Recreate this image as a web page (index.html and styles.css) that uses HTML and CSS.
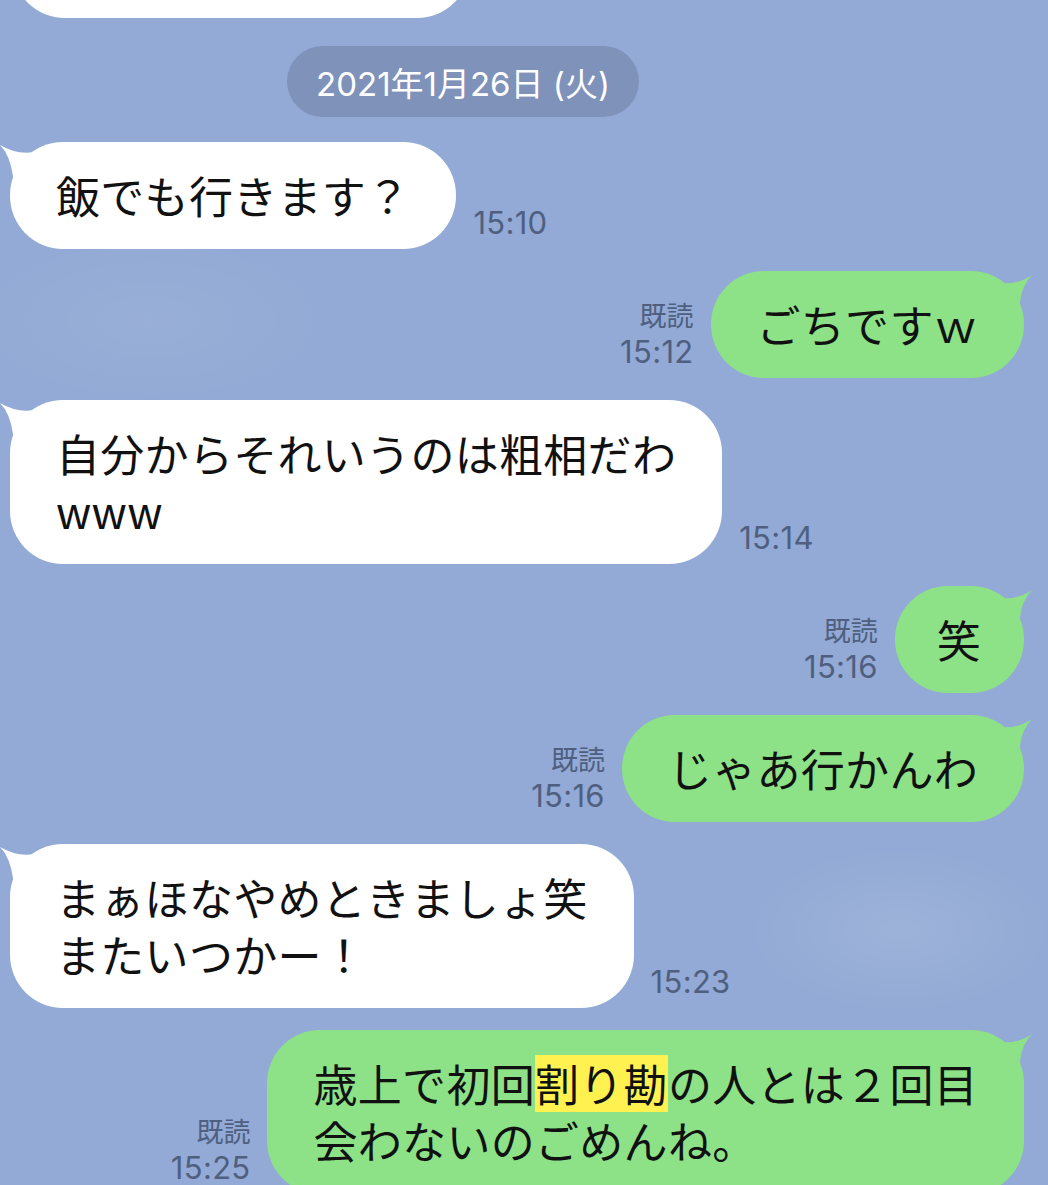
FILE: index.html
```html
<!DOCTYPE html>
<html lang="ja">
<head>
<meta charset="utf-8">
<title>LINE</title>
<link rel="stylesheet" href="styles.css">
</head>
<body>
<main class="chat">
  <div class="row left first">
    <div class="bubble white cut"></div>
  </div>

  <div class="date"><span class="date-pill">2021年1月26日 (火)</span></div>

  <div class="row left">
    <div class="bubble white">
      <svg class="tail tail-l" width="40" height="40" viewBox="0 0 40 40"><path d="M0,3 Q17,13 34,10 L34,40 L14,40 L13,34 Q10,13 0,3 Z"/></svg>
      飯でも行きます？
    </div>
    <div class="meta"><span class="time">15:10</span></div>
  </div>

  <div class="row right">
    <div class="meta"><span class="read">既読</span><span class="time">15:12</span></div>
    <div class="bubble green">
      <svg class="tail tail-r" width="40" height="40" viewBox="0 0 40 40"><path d="M38,4 Q24,14 6,12 L6,40 L24,40 L26,31 Q28,14 38,4 Z"/></svg>
      ごちですｗ
    </div>
  </div>

  <div class="row left">
    <div class="bubble white">
      <svg class="tail tail-l" width="40" height="40" viewBox="0 0 40 40"><path d="M0,3 Q17,13 34,10 L34,40 L14,40 L13,34 Q10,13 0,3 Z"/></svg>
      <span class="line">自分からそれいうのは粗相だわ</span><span class="line">www</span>
    </div>
    <div class="meta"><span class="time">15:14</span></div>
  </div>

  <div class="row right">
    <div class="meta"><span class="read">既読</span><span class="time">15:16</span></div>
    <div class="bubble green single">
      <svg class="tail tail-r" width="40" height="40" viewBox="0 0 40 40"><path d="M38,4 Q24,14 6,12 L6,40 L24,40 L26,31 Q28,14 38,4 Z"/></svg>
      笑
    </div>
  </div>

  <div class="row right">
    <div class="meta"><span class="read">既読</span><span class="time">15:16</span></div>
    <div class="bubble green">
      <svg class="tail tail-r" width="40" height="40" viewBox="0 0 40 40"><path d="M38,4 Q24,14 6,12 L6,40 L24,40 L26,31 Q28,14 38,4 Z"/></svg>
      じゃあ行かんわ
    </div>
  </div>

  <div class="row left">
    <div class="bubble white">
      <svg class="tail tail-l" width="40" height="40" viewBox="0 0 40 40"><path d="M0,3 Q17,13 34,10 L34,40 L14,40 L13,34 Q10,13 0,3 Z"/></svg>
      <span class="line">まぁほなやめときましょ笑</span><span class="line">またいつかー！</span>
    </div>
    <div class="meta"><span class="time">15:23</span></div>
  </div>

  <div class="row right">
    <div class="meta"><span class="read">既読</span><span class="time">15:25</span></div>
    <div class="bubble green">
      <svg class="tail tail-r" width="40" height="40" viewBox="0 0 40 40"><path d="M38,4 Q24,14 6,12 L6,40 L24,40 L26,31 Q28,14 38,4 Z"/></svg>
      <span class="line">歳上で初回<span class="mark">割り勘</span>の人とは２回目</span><span class="line">会わないのごめんね。</span>
    </div>
  </div>
</main>
</body>
</html>
```

FILE: styles.css
```css
html, body {
  margin: 0;
  padding: 0;
}

body {
  width: 1048px;
  height: 1185px;
  overflow: hidden;
  background-color: #92aad5;
  background-image:
    radial-gradient(ellipse 220px 120px at 900px 930px, rgba(255,255,255,0.10), rgba(255,255,255,0) 70%),
    radial-gradient(ellipse 260px 120px at 150px 320px, rgba(255,255,255,0.06), rgba(255,255,255,0) 70%);
  font-family: "Noto Sans CJK JP", "Noto Sans", sans-serif;
  color: #111;
}

.chat {
  display: flex;
  flex-direction: column;
  gap: 22px;
}

.row {
  display: flex;
  align-items: flex-end;
  gap: 17px;
}

.row.left {
  padding-left: 10px;
  justify-content: flex-start;
}

.row.right {
  padding-right: 24px;
  justify-content: flex-end;
}

.row.first {
  margin-top: -89px;
}

.bubble {
  position: relative;
  border-radius: 53px;
  padding: 25px 46px;
  font-size: 44px;
  line-height: 57px;
  white-space: nowrap;
  letter-spacing: 0.3px;
}

.line {
  display: block;
  height: 57px;
}

.bubble.white {
  background: #ffffff;
}

.bubble.green {
  background: #8de287;
}

.bubble.single {
  padding-left: 42px;
  padding-right: 43px;
}

.bubble.cut {
  width: 366px;
  height: 57px;
  margin-left: 2px;
}

.tail {
  position: absolute;
  top: 0;
}

.tail-l {
  left: -10px;
  fill: #ffffff;
}

.tail-r {
  right: -10px;
  fill: #8de287;
}

.mark {
  display: inline-block;
  background: #fff150;
  line-height: 57px;
  height: 57px;
  vertical-align: top;
}

.meta {
  display: flex;
  flex-direction: column;
  padding-bottom: 9px;
  color: #4f5f80;
  line-height: 34px;
}

.row.right .meta {
  align-items: flex-end;
}

.read {
  font-size: 27px;
  margin-bottom: 3px;
}

.time {
  font-family: Inter, "Noto Sans", sans-serif;
  font-size: 31px;
  letter-spacing: 0.3px;
}

.date {
  display: flex;
  justify-content: center;
  margin: 6px 0 3px;
}

.date-pill {
  display: inline-flex;
  align-items: center;
  justify-content: center;
  width: 352px;
  height: 71px;
  border-radius: 36px;
  background: #7e92ba;
  color: #ffffff;
  font-family: Inter, "Noto Sans CJK JP", sans-serif;
  font-size: 33px;
  margin-left: -122px;
}
```
